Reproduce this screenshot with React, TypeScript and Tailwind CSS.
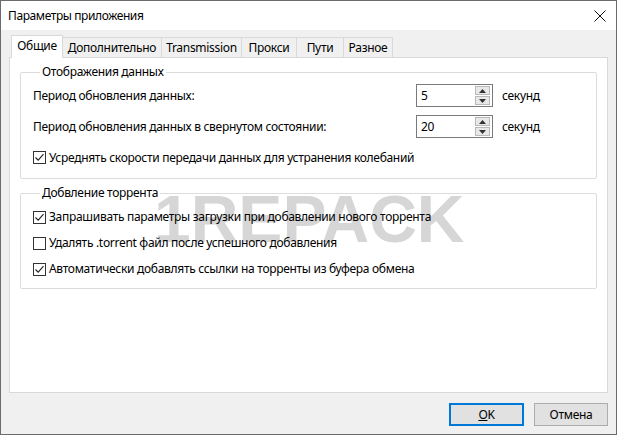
import React from "react"

const font = { fontFamily: '"Noto Sans", "Open Sans", sans-serif' }

function CheckBox({ checked, label }: { checked: boolean; label: string }) {
  return (
    <div className="flex items-center gap-[3px]">
      <span className="w-[13px] h-[13px] border border-[#333333] bg-white flex items-center justify-center">
        {checked && (
          <svg width="11" height="11" viewBox="0 0 11 11">
            <path d="M1.5 5.5 L4.2 8.2 L9.5 2.2" fill="none" stroke="#222" strokeWidth="1.1" />
          </svg>
        )}
      </span>
      <span>{label}</span>
    </div>
  )
}

function SpinBox({ value }: { value: string }) {
  return (
    <div className="w-[77px] h-[23px] border border-[#7a7a7a] bg-white flex items-center justify-between pl-[4px] pr-[2px]">
      <span>{value}</span>
      <div className="flex flex-col gap-[1px]">
        <span className="w-[15px] h-[9px] bg-[#e8e8e8] border border-[#b9b9b9] flex items-center justify-center">
          <svg width="7" height="4" viewBox="0 0 7 4"><path d="M0 4 L3.5 0 L7 4 Z" fill="#333" /></svg>
        </span>
        <span className="w-[15px] h-[9px] bg-[#e8e8e8] border border-[#b9b9b9] flex items-center justify-center">
          <svg width="7" height="4" viewBox="0 0 7 4"><path d="M0 0 L3.5 4 L7 0 Z" fill="#333" /></svg>
        </span>
      </div>
    </div>
  )
}

const tabs = [
  { name: "Общие", w: "w-[52px]" },
  { name: "Дополнительно", w: "w-[99px]" },
  { name: "Transmission", w: "w-[80px]" },
  { name: "Прокси", w: "w-[55px]" },
  { name: "Пути", w: "w-[47px]" },
  { name: "Разное", w: "w-[49px]" },
]

export default function App() {
  return (
    <div
      className="w-[617px] h-[435px] bg-[#f0f0f0] border border-[#6b6b6b] flex flex-col text-[12px] tracking-[-0.3px] text-black leading-[16px]"
      style={font}
    >
      {/* Title bar */}
      <div className="h-[29px] bg-white flex items-center justify-between pl-[7px] pr-[10px]">
        <span className="tracking-[-0.4px]">Параметры приложения</span>
        <svg width="12" height="12" viewBox="0 0 12 12">
          <path d="M0.5 0.5 L11.5 11.5 M11.5 0.5 L0.5 11.5" stroke="#111" strokeWidth="1" />
        </svg>
      </div>

      {/* Body */}
      <div className="flex-1 flex flex-col px-[8px] pt-[5px]">
        <div className="flex items-end pl-[2px] h-[22px]">
          {tabs.map((t, i) =>
            i === 0 ? (
              <div
                key={t.name}
                className={`${t.w} h-[23px] -mb-px relative z-10 bg-white border border-[#d9d9d9] border-b-0 flex items-center justify-center pb-[2px]`}
              >
                {t.name}
              </div>
            ) : (
              <div
                key={t.name}
                className={`${t.w} h-[20px] bg-[#f0f0f0] border border-[#d9d9d9] border-b-0 border-l-0 flex items-center justify-center`}
              >
                {t.name}
              </div>
            )
          )}
        </div>

        {/* Tab page */}
        <div className="relative h-[336px] bg-white border border-[#d9d9d9] px-[10px] pt-[6px]">
          <div
            className="absolute left-[144px] top-[128px] text-[66px] leading-none font-bold tracking-normal text-[#d6d6d6] select-none"
            style={{ fontFamily: '"Liberation Sans", Arial, sans-serif' }}
          >
            1REPACK
          </div>

          <div className="relative flex flex-col gap-[6px]">
            <fieldset className="border border-[#dcdcdc] rounded-[2px] px-[12px] pb-[5px]">
              <legend className="ml-[7px] px-[2px]">Отображения данных</legend>
              <div className="h-[31px] flex items-center">
                <span className="w-[383px]">Период обновления данных:</span>
                <SpinBox value="5" />
                <span className="ml-[9px]">секунд</span>
              </div>
              <div className="h-[31px] flex items-center">
                <span className="w-[383px]">Период обновления данных в свернутом состоянии:</span>
                <SpinBox value="20" />
                <span className="ml-[9px]">секунд</span>
              </div>
              <div className="h-[31px] flex items-center">
                <CheckBox checked label="Усреднять скорости передачи данных для устранения колебаний" />
              </div>
            </fieldset>

            <fieldset className="border border-[#dcdcdc] rounded-[2px] px-[12px] pt-[3px] pb-[6px]">
              <legend className="ml-[7px] px-[2px]">Добвление торрента</legend>
              <div className="h-[26px] flex items-center">
                <CheckBox checked label="Запрашивать параметры загрузки при добавлении нового торрента" />
              </div>
              <div className="h-[26px] flex items-center">
                <CheckBox checked={false} label="Удалять .torrent файл после успешного добавления" />
              </div>
              <div className="h-[26px] flex items-center">
                <CheckBox checked label="Автоматически добавлять ссылки на торренты из буфера обмена" />
              </div>
            </fieldset>
          </div>
        </div>

        {/* Buttons */}
        <div className="flex justify-end gap-[10px] pt-[10px]">
          <button className="w-[75px] h-[23px] bg-[#e1e1e1] border-2 border-[#0078d7] flex items-center justify-center">
            <span><u>O</u>K</span>
          </button>
          <button className="w-[74px] h-[23px] bg-[#e1e1e1] border border-[#adadad] flex items-center justify-center">
            Отмена
          </button>
        </div>
      </div>
    </div>
  )
}
